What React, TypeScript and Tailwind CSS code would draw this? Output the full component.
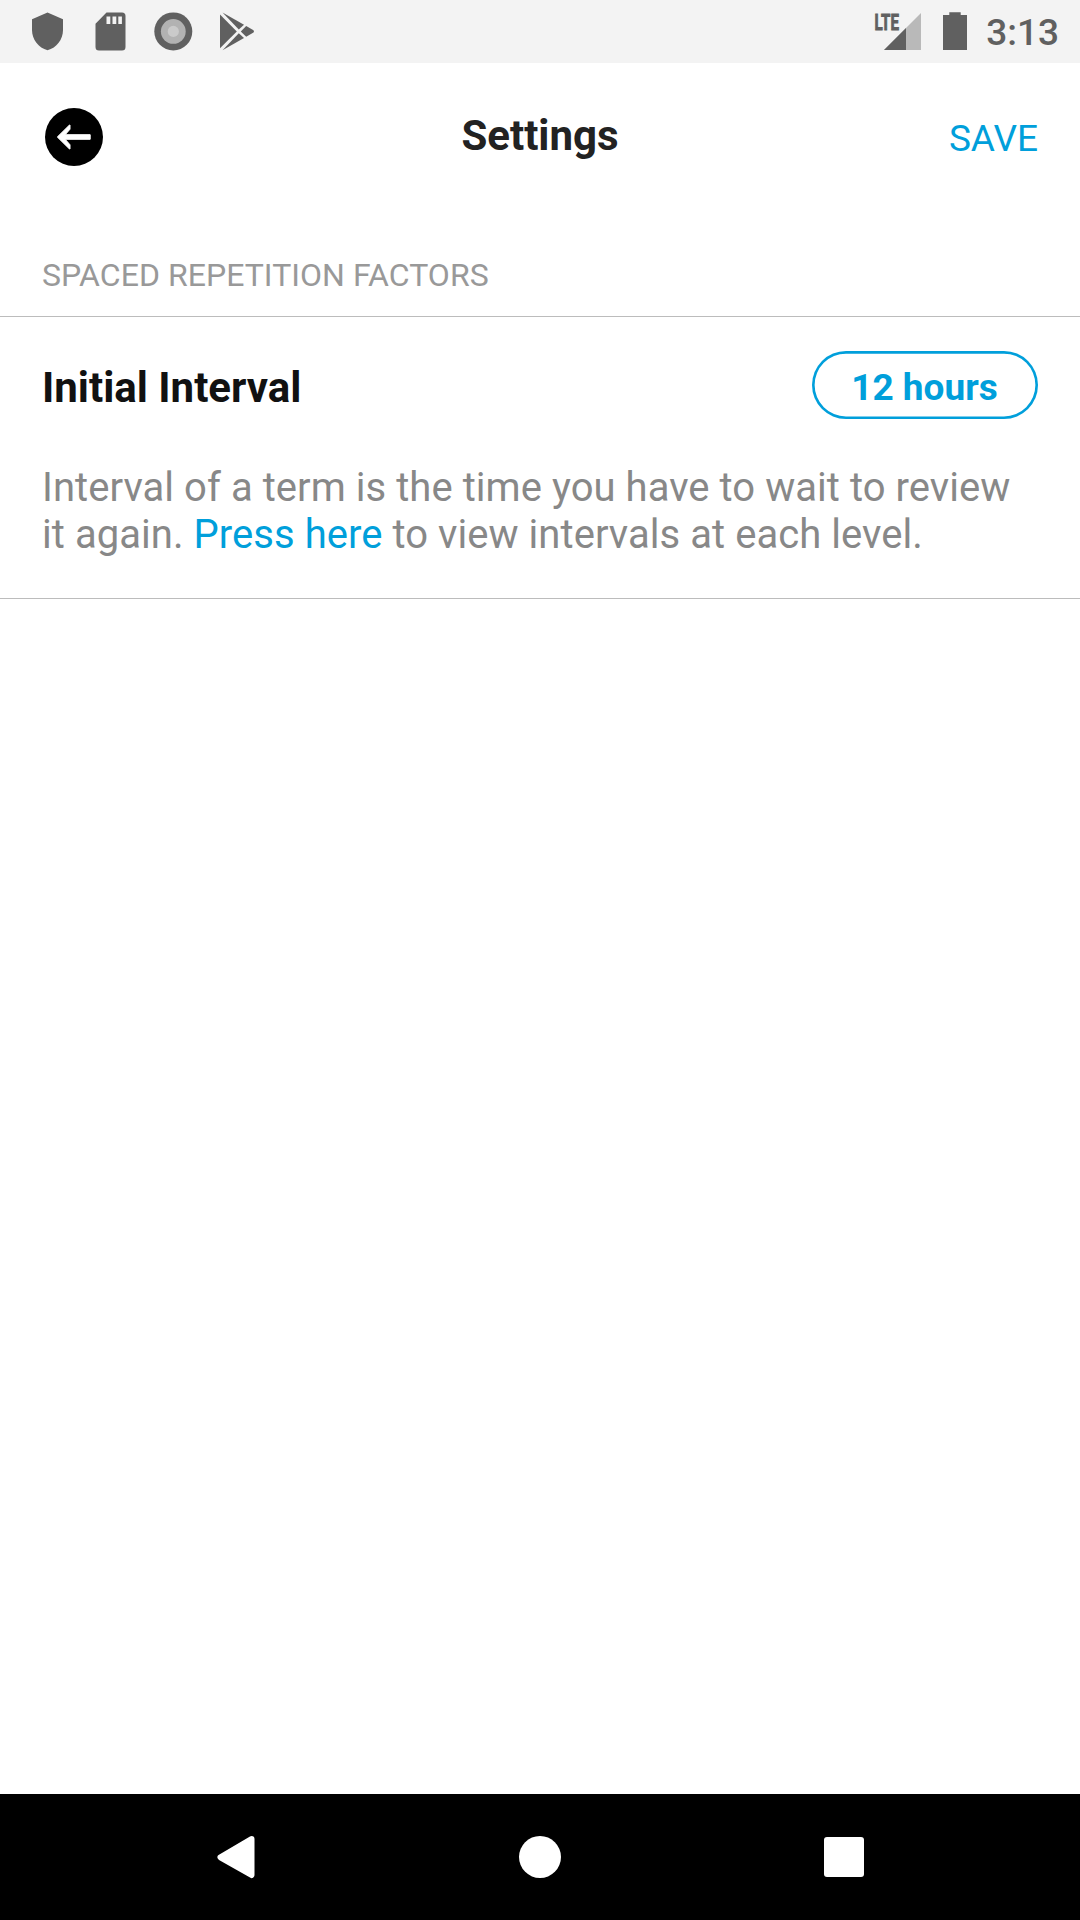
function StatusBar() {
  return (
    <div className="flex h-[63px] shrink-0 items-center justify-between bg-[#f3f3f3] text-[#606060]">
      <div className="flex items-center">
        <svg className="ml-[26px] h-[63px] w-[42px]" viewBox="26 0 42 63" fill="currentColor">
          <path d="M47.5 12.4 63 19.3V30c0 9.5-6.5 17.8-15.5 20.3C38.5 47.8 32 39.5 32 30V19.3Z" />
        </svg>
        <svg className="ml-[21px] h-[63px] w-[42px]" viewBox="89 0 42 63" fill="currentColor">
          <path
            fillRule="evenodd"
            d="M106.5 12.5H122a3.5 3.5 0 0 1 3.5 3.5V47a3.5 3.5 0 0 1-3.5 3.5H99a3.5 3.5 0 0 1-3.5-3.5V23.7ZM106.5 16.5v7.5h3.8v-7.5ZM112.5 16.5v7.5h3.8v-7.5ZM118.3 16.5v7.5h3.6v-7.5Z"
          />
        </svg>
        <svg className="ml-[21px] h-[63px] w-[42px]" viewBox="152 0 42 63">
          <circle cx="173.3" cy="31.4" r="19" fill="currentColor" />
          <circle cx="173.3" cy="31.4" r="12.4" fill="#b2b2b2" />
          <circle cx="173.3" cy="31.4" r="5.6" fill="#cacaca" />
        </svg>
        <svg className="ml-[21px] h-[63px] w-[42px]" viewBox="215 0 42 63" fill="currentColor">
          <path d="M220 14.5 236.8 31.4 220 48.2Z" />
          <path d="M222.5 12.5 244 24.8 238.8 29.6Z" />
          <path d="M222.5 50.3 244 38 238.8 33.2Z" />
          <path d="M246.2 26 253.5 30.2q1 1.2 0 2.4L246.2 36.8 240.8 31.4Z" />
        </svg>
      </div>
      <div className="flex items-center pr-[21px]">
        <svg className="h-[63px] w-[52px]" viewBox="873 0 52 63" fill="currentColor">
          <path d="M884 50 921 13V50Z" fill="#b9b9b9" />
          <path d="M884 50 906 28V50Z" />
          <text
            x="874.6"
            y="29.6"
            fontSize="22"
            fontWeight="700"
            fontFamily="Roboto, sans-serif"
            textLength="24.3"
            lengthAdjust="spacingAndGlyphs"
            stroke="currentColor"
            strokeWidth="0.9"
          >
            LTE
          </text>
        </svg>
        <svg className="ml-[15px] h-[63px] w-[30px]" viewBox="940 0 30 63" fill="currentColor">
          <path d="M949.3 12.2H960.7V15H967V50H943V15H949.3Z" />
        </svg>
        <span className="ml-[16px] pt-[2px] text-[37px] leading-[43px] font-medium">3:13</span>
      </div>
    </div>
  );
}

function Header() {
  return (
    <header className="grid h-[147px] shrink-0 grid-cols-3 items-center px-[42px]">
      <button className="size-[64px]" aria-label="Back">
        <svg className="size-[64px]" viewBox="0 0 64 64">
          <circle cx="32" cy="32" r="29" fill="#000" />
          <path
            d="M15.3 32 27.2 20.3 28 20V24.200L23.200 29.700H48.200V34.300H23.200L28 39.800V44L27.200 43.700Z"
            fill="#fff"
            stroke="#fff"
            strokeWidth="1"
            strokeLinejoin="round"
          />
        </svg>
      </button>
      <h1 className="pb-[2px] text-center text-[42px] leading-[49px] font-bold text-[#222222]">Settings</h1>
      <button className="pt-[3px] text-right text-[37px] leading-[43px] text-[#009fdb]">SAVE</button>
    </header>
  );
}

function IntervalSetting() {
  return (
    <section className="border-y border-[#bcbcbc] px-[42px] pt-[34px] pb-[40px]">
      <div className="flex items-center justify-between">
        <h2 className="pt-[5px] text-[42px] leading-[49px] font-bold text-[#111111]">Initial Interval</h2>
        <button className="h-[68px] w-[226px] rounded-full pt-[4px] pr-[1px] text-[37px] leading-[43px] font-bold text-[#009fdb] shadow-[inset_0_0_0_2.625px_#009fdb]">
          12 hours
        </button>
      </div>
      <p className="mt-[45px] text-[40px] leading-[47px] tracking-[0.05px] text-[#888888]">
        Interval of a term is the time you have to wait to review it again.{" "}
        <a className="text-[#009fdb]">Press here</a> to view intervals at each level.
      </p>
    </section>
  );
}

function NavigationBar() {
  return (
    <nav className="flex h-[126px] shrink-0 items-center justify-between bg-black px-[206px]">
      <svg className="size-[60px]" viewBox="206 1827 60 60">
        <path
          d="M251.5 1839 220.5 1857.3 251.5 1875Z"
          fill="#fff"
          stroke="#fff"
          strokeWidth="6"
          strokeLinejoin="round"
        />
      </svg>
      <div className="size-[42px] rounded-full bg-white" />
      <div className="flex size-[60px] items-center justify-center">
        <div className="size-[39.5px] rounded-[3px] bg-white" />
      </div>
    </nav>
  );
}

export default function App() {
  return (
    <div className="flex h-[1920px] w-[1080px] flex-col bg-white font-[Roboto,sans-serif]">
      <StatusBar />
      <Header />
      <main className="flex-1">
        <h3 className="px-[42px] pt-[47px] pb-[22px] text-[32px] leading-[37px] tracking-[0.04px] text-[#999999]">
          SPACED REPETITION FACTORS
        </h3>
        <IntervalSetting />
      </main>
      <NavigationBar />
    </div>
  );
}
